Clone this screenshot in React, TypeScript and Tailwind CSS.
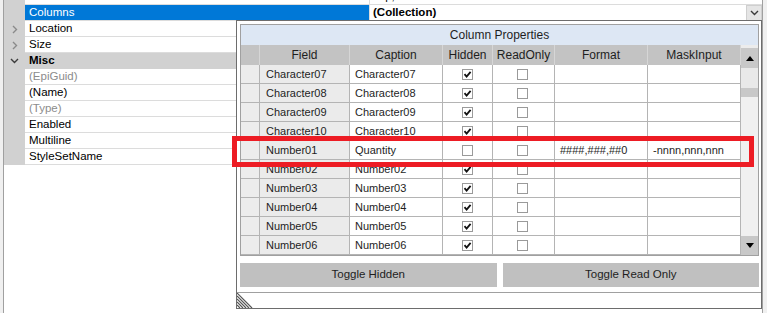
import React from 'react';

type PropRow = {
  label: string;
  value?: string;
  selected?: boolean;
  category?: boolean;
  expand?: boolean;
  muted?: boolean;
  dropdown?: boolean;
};

const props: PropRow[] = [
  { label: 'Anchor', value: 'Top, Left' },
  { label: 'Columns', value: '(Collection)', selected: true, dropdown: true },
  { label: 'Location', expand: true },
  { label: 'Size', expand: true },
  { label: 'Misc', category: true },
  { label: '(EpiGuid)', muted: true },
  { label: '(Name)' },
  { label: '(Type)', muted: true },
  { label: 'Enabled' },
  { label: 'Multiline' },
  { label: 'StyleSetName' },
];

type GridRow = { field: string; caption: string; hidden: boolean; format?: string; mask?: string };

const gridRows: GridRow[] = [
  { field: 'Character07', caption: 'Character07', hidden: true },
  { field: 'Character08', caption: 'Character08', hidden: true },
  { field: 'Character09', caption: 'Character09', hidden: true },
  { field: 'Character10', caption: 'Character10', hidden: true },
  { field: 'Number01', caption: 'Quantity', hidden: false, format: '####,###,##0', mask: '-nnnn,nnn,nnn' },
  { field: 'Number02', caption: 'Number02', hidden: true },
  { field: 'Number03', caption: 'Number03', hidden: true },
  { field: 'Number04', caption: 'Number04', hidden: true },
  { field: 'Number05', caption: 'Number05', hidden: true },
  { field: 'Number06', caption: 'Number06', hidden: true },
];

function Check({ checked }: { checked: boolean }) {
  return (
    <svg width="11" height="11" viewBox="0 0 11 11">
      <rect x="0.5" y="0.5" width="10" height="10" fill="white" stroke="#9a9a9a" />
      {checked && <path d="M2.5 5.2 L4.6 7.6 L8.6 2.8" fill="none" stroke="#111" strokeWidth="1.8" />}
    </svg>
  );
}

function Chevron({ down }: { down?: boolean }) {
  return down ? (
    <svg width="9" height="6" viewBox="0 0 9 6">
      <path d="M1 1 L4.5 4.5 L8 1" fill="none" stroke="#3c3c3c" strokeWidth="1.4" />
    </svg>
  ) : (
    <svg width="6" height="9" viewBox="0 0 6 9">
      <path d="M1 1 L4.5 4.5 L1 8" fill="none" stroke="#8a8a8a" strokeWidth="1.4" />
    </svg>
  );
}

export default function App() {
  return (
    <div className="relative w-[767px] h-[313px] overflow-hidden bg-white text-[11px] text-black font-['Liberation_Sans',Arial,sans-serif]">
      {/* Property grid */}
      <div className="flex h-full">
        <div className="w-[3px] bg-[#f0f0f0]" />
        <div className="flex-1 border-x border-[#a0a0a0] bg-white text-[11.5px]">
          <div className="-mt-[11px]">
            {props.map((p) => (
              <div key={p.label} className="flex h-[16px]">
                <div className="w-[21px] bg-[#d1d1d1] flex items-center justify-center">
                  {p.expand && <Chevron />}
                  {p.category && <Chevron down />}
                </div>
                {p.category ? (
                  <div className="flex-1 bg-[#d1d1d1] pl-[4px] flex items-center font-bold">{p.label}</div>
                ) : (
                  <>
                    <div
                      className={`w-[345px] border-r border-b border-[#dcdcdc] pl-[4px] flex items-center ${
                        p.selected ? 'bg-[#0078d7] text-white' : p.muted ? 'text-[#8c8c8c]' : ''
                      }`}
                    >
                      {p.label}
                    </div>
                    <div className="flex-1 border-b border-[#dcdcdc] pl-[3px] flex items-center">
                      <span className={p.dropdown ? 'font-bold' : ''}>{p.value}</span>
                      {p.dropdown && (
                        <div className="ml-auto w-[16px] h-[16px] bg-[#e5e5e5] border border-[#cfcfcf] flex items-center justify-center">
                          <Chevron down />
                        </div>
                      )}
                    </div>
                  </>
                )}
              </div>
            ))}
          </div>
        </div>
        <div className="w-[4px] bg-[#f0f0f0]" />
      </div>

      {/* Column Properties dropdown */}
      <div className="absolute left-[236px] top-[20px] w-[526px] h-[289px] border border-[#6d6d6d] bg-white flex flex-col">
        <div className="pl-[3px] pr-[2px] pt-[3px]">
          <div className="border border-[#a0a0a0] text-[#1e1e1e]">
            <div className="h-[20px] bg-[#dde7f4] flex items-center justify-center text-[12px]">Column Properties</div>
            <div className="flex">
              <div className="w-[500px]">
                <div className="flex h-[20px] bg-[#c3c3c3] text-[12px]">
                  <div className="w-[19px] border-r border-[#d6d6d6]" />
                  <div className="w-[90px] border-r border-[#d6d6d6] flex items-center justify-center">Field</div>
                  <div className="w-[93px] border-r border-[#d6d6d6] flex items-center justify-center">Caption</div>
                  <div className="w-[50px] border-r border-[#d6d6d6] flex items-center justify-center">Hidden</div>
                  <div className="w-[62px] border-r border-[#d6d6d6] flex items-center justify-center">ReadOnly</div>
                  <div className="w-[93px] border-r border-[#d6d6d6] flex items-center justify-center">Format</div>
                  <div className="w-[93px] border-r border-[#d6d6d6] flex items-center justify-center">MaskInput</div>
                </div>
                {gridRows.map((r) => (
                  <div key={r.field} className="flex h-[19px] border-b border-[#b4b4b4]">
                    <div className="w-[19px] bg-[#ececec] border-r border-[#b4b4b4]" />
                    <div className="w-[90px] bg-[#ebebeb] border-r border-[#b4b4b4] pl-[6px] flex items-center">{r.field}</div>
                    <div className="w-[93px] border-r border-[#b4b4b4] pl-[5px] flex items-center">{r.caption}</div>
                    <div className="w-[50px] border-r border-[#b4b4b4] flex items-center justify-center">
                      <Check checked={r.hidden} />
                    </div>
                    <div className="w-[62px] border-r border-[#b4b4b4] flex items-center justify-center pr-[2px]">
                      <Check checked={false} />
                    </div>
                    <div className="w-[93px] border-r border-[#b4b4b4] pl-[5px] flex items-center">{r.format}</div>
                    <div className="w-[93px] border-r border-[#b4b4b4] pl-[5px] flex items-center">{r.mask}</div>
                  </div>
                ))}
              </div>
              {/* scrollbar */}
              <div className="w-[17px] flex flex-col bg-[#f0f0f0]">
                <div className="h-[3px] bg-[#ececec]" />
                <div className="h-[20px] bg-[#c8c8c8] flex items-center justify-center">
                  <svg width="8" height="5" viewBox="0 0 8 5">
                    <path d="M0 5 L4 0 L8 5 Z" fill="#000" />
                  </svg>
                </div>
                <div className="h-[20px] bg-[#e9e9e9]" />
                <div className="h-[9px] bg-[#c8c8c8]" />
                <div className="flex-1 bg-[#f0f0f0]" />
                <div className="h-[19px] bg-[#c8c8c8] flex items-center justify-center">
                  <svg width="8" height="5" viewBox="0 0 8 5">
                    <path d="M0 0 L8 0 L4 5 Z" fill="#000" />
                  </svg>
                </div>
              </div>
            </div>
          </div>
          <div className="mt-[7px] flex gap-[6px] text-[11.5px]">
            <div className="flex-1 h-[24px] bg-[#c0c0c0] flex items-center justify-center text-[#1e1e1e]">Toggle Hidden</div>
            <div className="flex-1 h-[24px] bg-[#c0c0c0] flex items-center justify-center text-[#1e1e1e]">Toggle Read Only</div>
          </div>
        </div>
        <div className="mt-[5px] h-[16px] border-t border-[#a0a0a0]">
          <svg width="16" height="15" viewBox="0 0 16 15">
            {[0, 3, 6, 9, 12].map((c) => (
              <line key={c} x1="0" y1={c} x2={15 - c} y2="15" stroke="#555" strokeWidth="1.2" />
            ))}
          </svg>
        </div>
      </div>

      {/* highlight */}
      <div className="absolute left-[232px] top-[136px] w-[522px] h-[31px] border-[5px] border-[#ed1c24]" />
    </div>
  );
}
